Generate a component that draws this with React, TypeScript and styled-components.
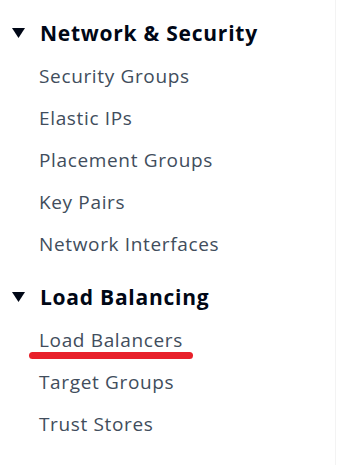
import styled, { createGlobalStyle } from "styled-components";

const GlobalStyle = createGlobalStyle`
  html, body {
    margin: 0;
    padding: 0;
    background: #ffffff;
  }
  body {
    font-family: "Open Sans", "Noto Sans", sans-serif;
  }
`;

const Nav = styled.nav`
  width: 336px;
  height: 465px;
  box-sizing: border-box;
  border-right: 1px solid #f3f3f3;
  padding-top: 11px;
  display: flex;
  flex-direction: column;
`;

const Section = styled.section`
  display: flex;
  flex-direction: column;
  margin-bottom: 10px;
`;

const Header = styled.div`
  display: flex;
  align-items: center;
  gap: 15px;
  padding-left: 12px;
  height: 43px;
  font-size: 21px;
  font-weight: 700;
  color: #000716;
  letter-spacing: 0.75px;
`;

const Caret = styled.svg`
  width: 13px;
  height: 10px;
  flex-shrink: 0;
`;

const List = styled.ul`
  list-style: none;
  margin: 0;
  padding: 1px 0 0 39px;
  display: flex;
  flex-direction: column;
`;

const Item = styled.li<{ $marked?: boolean }>`
  position: relative;
  height: 42px;
  line-height: 42px;
  font-size: 19px;
  letter-spacing: 0.65px;
  color: #414d5c;

  ${({ $marked }) =>
    $marked &&
    `
    &::after {
      content: "";
      position: absolute;
      left: -10px;
      width: 164px;
      top: 33px;
      height: 7px;
      border-radius: 4px;
      background: #e8202a;
    }
  `}
`;

const sections = [
  {
    title: "Network & Security",
    items: [
      { label: "Security Groups" },
      { label: "Elastic IPs" },
      { label: "Placement Groups" },
      { label: "Key Pairs" },
      { label: "Network Interfaces" },
    ],
  },
  {
    title: "Load Balancing",
    items: [
      { label: "Load Balancers", marked: true },
      { label: "Target Groups" },
      { label: "Trust Stores" },
    ],
  },
];

const App = () => {
  return (
    <>
      <GlobalStyle />
      <Nav>
        {sections.map((section) => (
          <Section key={section.title}>
            <Header>
              <Caret viewBox="0 0 13 10">
                <polygon points="0,0 13,0 6.5,10" fill="#000716" />
              </Caret>
              {section.title}
            </Header>
            <List>
              {section.items.map((item) => (
                <Item key={item.label} $marked={item.marked}>
                  {item.label}
                </Item>
              ))}
            </List>
          </Section>
        ))}
      </Nav>
    </>
  );
};

export default App;
